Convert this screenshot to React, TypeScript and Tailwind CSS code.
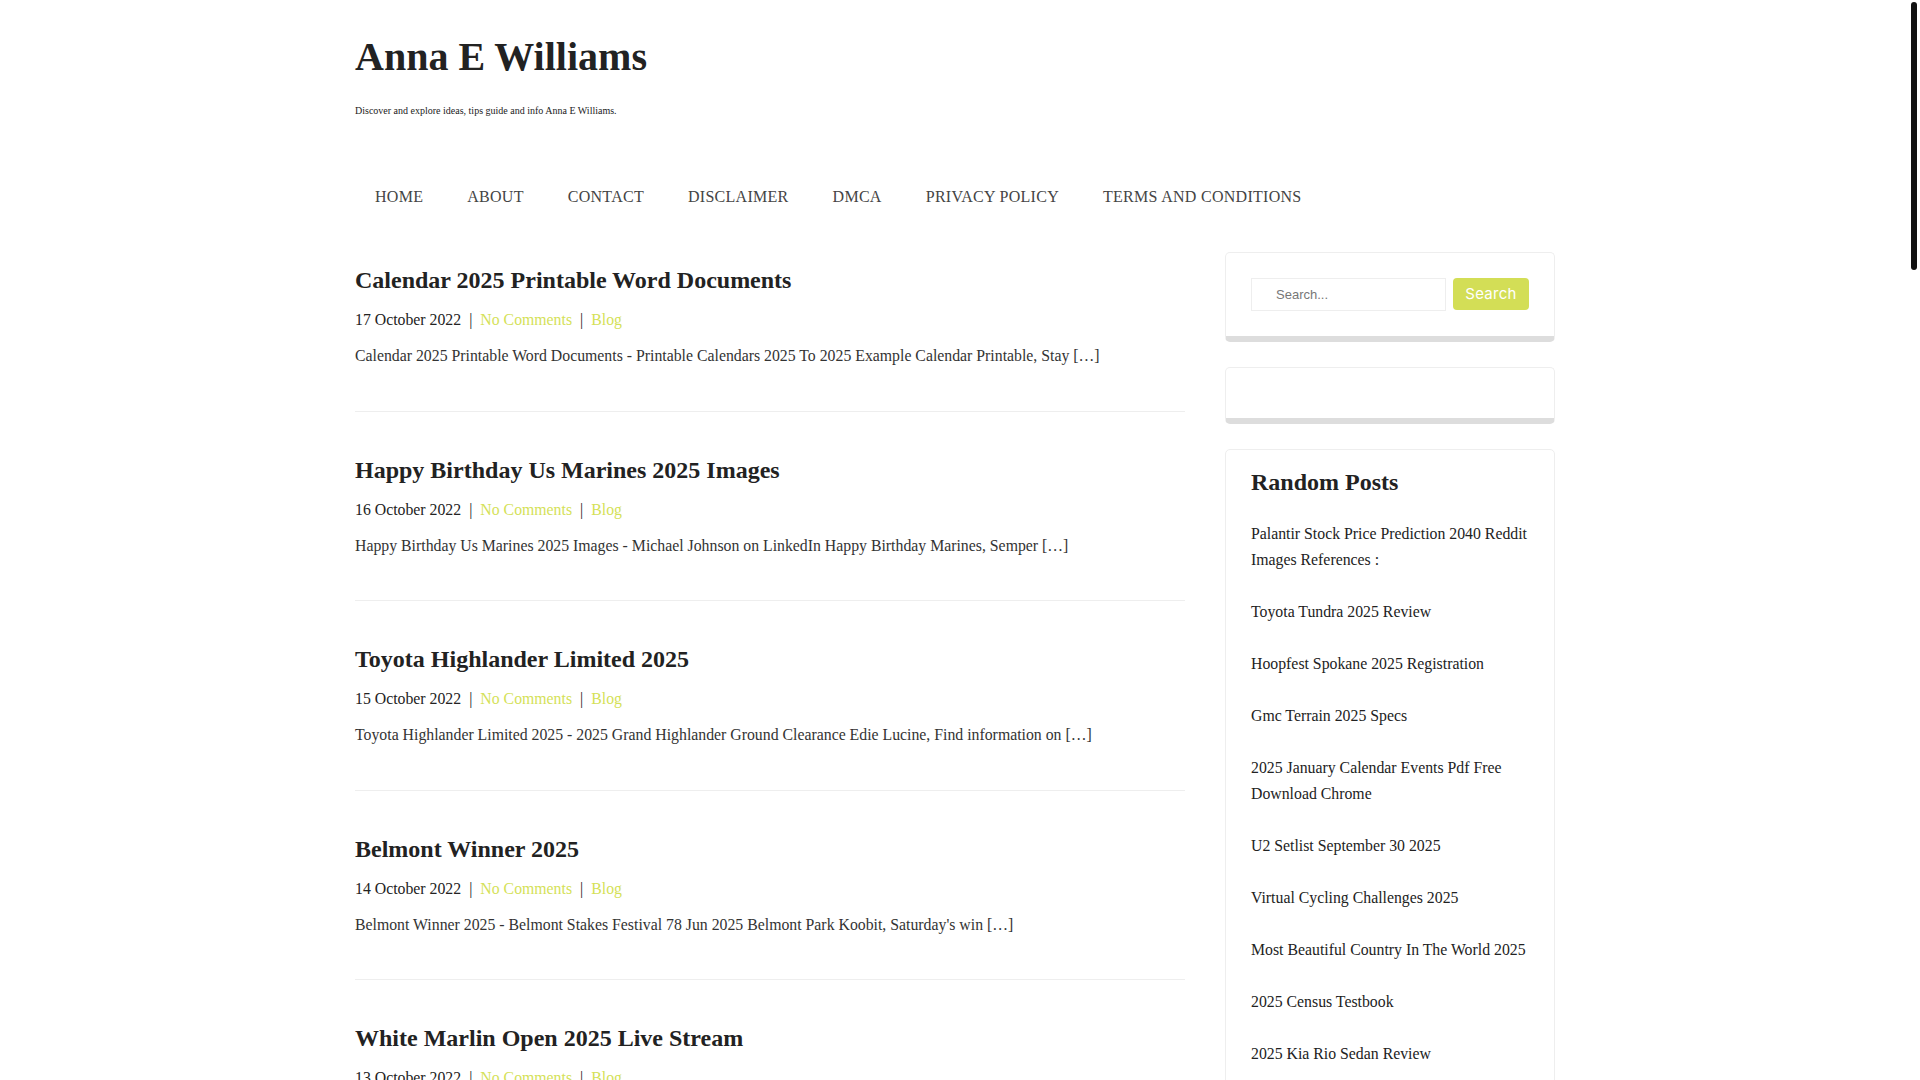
import React from "react";

const posts = [
  {
    title: "Calendar 2025 Printable Word Documents",
    date: "17 October 2022",
    excerpt:
      "Calendar 2025 Printable Word Documents - Printable Calendars 2025 To 2025 Example Calendar Printable, Stay […]",
  },
  {
    title: "Happy Birthday Us Marines 2025 Images",
    date: "16 October 2022",
    excerpt:
      "Happy Birthday Us Marines 2025 Images - Michael Johnson on LinkedIn Happy Birthday Marines, Semper […]",
  },
  {
    title: "Toyota Highlander Limited 2025",
    date: "15 October 2022",
    excerpt:
      "Toyota Highlander Limited 2025 - 2025 Grand Highlander Ground Clearance Edie Lucine, Find information on […]",
  },
  {
    title: "Belmont Winner 2025",
    date: "14 October 2022",
    excerpt:
      "Belmont Winner 2025 - Belmont Stakes Festival 78 Jun 2025 Belmont Park Koobit, Saturday's win […]",
  },
  {
    title: "White Marlin Open 2025 Live Stream",
    date: "13 October 2022",
    excerpt:
      "White Marlin Open 2025 Live Stream - White Marlin Open 2025 Live Stream Schedule, Watch Online […]",
  },
];

const randomPosts = [
  "Palantir Stock Price Prediction 2040 Reddit Images References :",
  "Toyota Tundra 2025 Review",
  "Hoopfest Spokane 2025 Registration",
  "Gmc Terrain 2025 Specs",
  "2025 January Calendar Events Pdf Free Download Chrome",
  "U2 Setlist September 30 2025",
  "Virtual Cycling Challenges 2025",
  "Most Beautiful Country In The World 2025",
  "2025 Census Testbook",
  "2025 Kia Rio Sedan Review",
  "Best Hybrid Cars 2025",
];

const nav = [
  "HOME",
  "ABOUT",
  "CONTACT",
  "DISCLAIMER",
  "DMCA",
  "PRIVACY POLICY",
  "TERMS AND CONDITIONS",
];

export default function App() {
  return (
    <div
      className="relative w-full h-[1080px] overflow-hidden bg-white text-[#333]"
      style={{ fontFamily: '"Liberation Serif", "Times New Roman", serif' }}
    >
      <div className="w-[1910px]">
        <div className="mx-auto w-[1200px]">
          {/* Header */}
          <header className="pt-[33px]">
            <h1 className="text-[40px] leading-[48px] font-bold text-[#222]">
              <a href="#">Anna E Williams</a>
            </h1>
            <p className="mt-[23px] text-[10px] leading-[14px] text-[#222]">
              Discover and explore ideas, tips guide and info Anna E Williams.
            </p>
          </header>

          {/* Navigation */}
          <nav className="mt-[67px] flex -ml-[2px]">
            {nav.map((n) => (
              <a
                key={n}
                href="#"
                className="px-[22px] text-[16px] tracking-[0.28px] leading-[24px] text-[#444]"
              >
                {n}
              </a>
            ))}
          </nav>

          {/* Main */}
          <div className="mt-[43px] flex gap-[40px] items-start">
            <main className="w-[830px] pt-[13px]">
              {posts.map((p, i) => (
                <article
                  key={p.title}
                  className={
                    i === 0
                      ? "pb-[42.5px] border-b border-[#eeeeee]"
                      : "pt-[43px] pb-[42.5px] border-b border-[#eeeeee]"
                  }
                >
                  <h2 className="text-[24px] leading-[30px] font-bold text-[#222]">
                    <a href="#">{p.title}</a>
                  </h2>
                  <div className="mt-[13px] flex items-center text-[15.8px] leading-[24px] text-[#222]">
                    <span>{p.date}</span>
                    <span className="mx-[8px]">|</span>
                    <a href="#" className="text-[#d4e157]">
                      No Comments
                    </a>
                    <span className="mx-[8px]">|</span>
                    <a href="#" className="text-[#d4e157]">
                      Blog
                    </a>
                  </div>
                  <p className="mt-[12px] text-[15.8px] leading-[24px] text-[#333]">
                    {p.excerpt}
                  </p>
                </article>
              ))}
            </main>

            <aside className="w-[330px] flex flex-col gap-[25px]">
              {/* Search widget */}
              <div className="rounded-[5px] border border-[#eeeeee] border-b-[6px] border-b-[#dddddd] bg-white p-[25px]">
                <form className="flex items-center gap-[7px]">
                  <input
                    type="text"
                    placeholder="Search..."
                    className="w-[195px] h-[33px] border border-[#eeeeee] pl-[24px] text-[13px] text-[#555] placeholder:text-[#777] outline-none"
                    style={{ fontFamily: '"Liberation Sans", Arial, sans-serif' }}
                  />
                  <button
                    type="button"
                    className="w-[76px] h-[32px] -mt-[1px] rounded-[4px] bg-[#d3de56] text-white text-[15px] tracking-[0.3px]"
                    style={{ fontFamily: 'Inter, "Liberation Sans", sans-serif' }}
                  >
                    Search
                  </button>
                </form>
              </div>

              {/* Empty widget */}
              <div className="h-[57px] rounded-[5px] border border-[#eeeeee] border-b-[6px] border-b-[#dddddd] bg-white" />

              {/* Random posts */}
              <div className="rounded-[5px] border border-[#eeeeee] bg-white pl-[25px] pr-[20px] pt-[17px] pb-[25px]">
                <h3 className="text-[24px] leading-[30px] font-bold text-[#222]">
                  Random Posts
                </h3>
                <ul className="mt-[24px] flex flex-col gap-[26px]">
                  {randomPosts.map((r) => (
                    <li key={r} className="text-[15.8px] leading-[26px] text-[#222]">
                      <a href="#">{r}</a>
                    </li>
                  ))}
                </ul>
              </div>
            </aside>
          </div>
        </div>
      </div>

      {/* Scrollbar thumb */}
      <div className="absolute right-[3px] top-[2px] w-[6px] h-[268px] rounded-full bg-[#111]" />
    </div>
  );
}
